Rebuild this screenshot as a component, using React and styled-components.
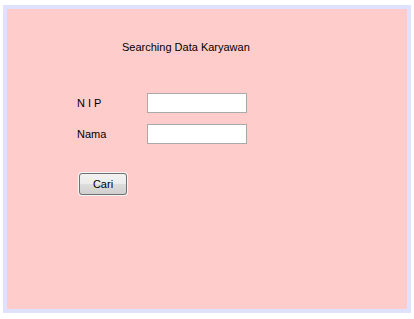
import React from "react";
import styled, { createGlobalStyle } from "styled-components";

const Global = createGlobalStyle`
  body {
    margin: 0;
    background: #ffffff;
    font-family: "Liberation Sans", Arial, sans-serif;
  }
`;

const Frame = styled.div`
  margin: 5px 0 0 3px;
  width: 400px;
  height: 300px;
  border: 4px solid #e0e0ff;
  background: #ffcccc;
`;

const Title = styled.div`
  padding: 32px 0 0 115px;
  font-size: 11px;
  line-height: 13px;
  color: #000;
`;

const Form = styled.div`
  margin: 39px 0 0 70px;
  display: grid;
  grid-template-columns: 70px 100px;
  row-gap: 11px;
  align-items: center;
`;

const Label = styled.label`
  font-size: 11px;
  line-height: 13px;
  color: #000;
`;

const Input = styled.input`
  box-sizing: border-box;
  width: 100px;
  height: 20px;
  margin: 0;
  padding: 0 3px;
  border: 1px solid #a9a9a9;
  background: #fff;
  outline: none;
  font: inherit;
`;

const ButtonWrap = styled.div`
  margin: 28px 0 0 71px;
  width: 50px;
  height: 24px;
  box-sizing: border-box;
  border: 1px solid #f4f4f4;
  border-radius: 3px;
`;

const Button = styled.button`
  display: block;
  box-sizing: border-box;
  width: 48px;
  height: 22px;
  margin: 0;
  padding: 0;
  border: 1px solid #707070;
  border-radius: 3px;
  background: linear-gradient(#f2f2f2 0%, #ebebeb 50%, #dddddd 51%, #cfcfcf 100%);
  font-family: "Liberation Sans", Arial, sans-serif;
  font-size: 11px;
  color: #000;
`;

export default function App() {
  return (
    <>
      <Global />
      <Frame>
        <Title>Searching Data Karyawan</Title>
        <Form>
          <Label>N I P</Label>
          <Input />
          <Label>Nama</Label>
          <Input />
        </Form>
        <ButtonWrap>
          <Button>Cari</Button>
        </ButtonWrap>
      </Frame>
    </>
  );
}
